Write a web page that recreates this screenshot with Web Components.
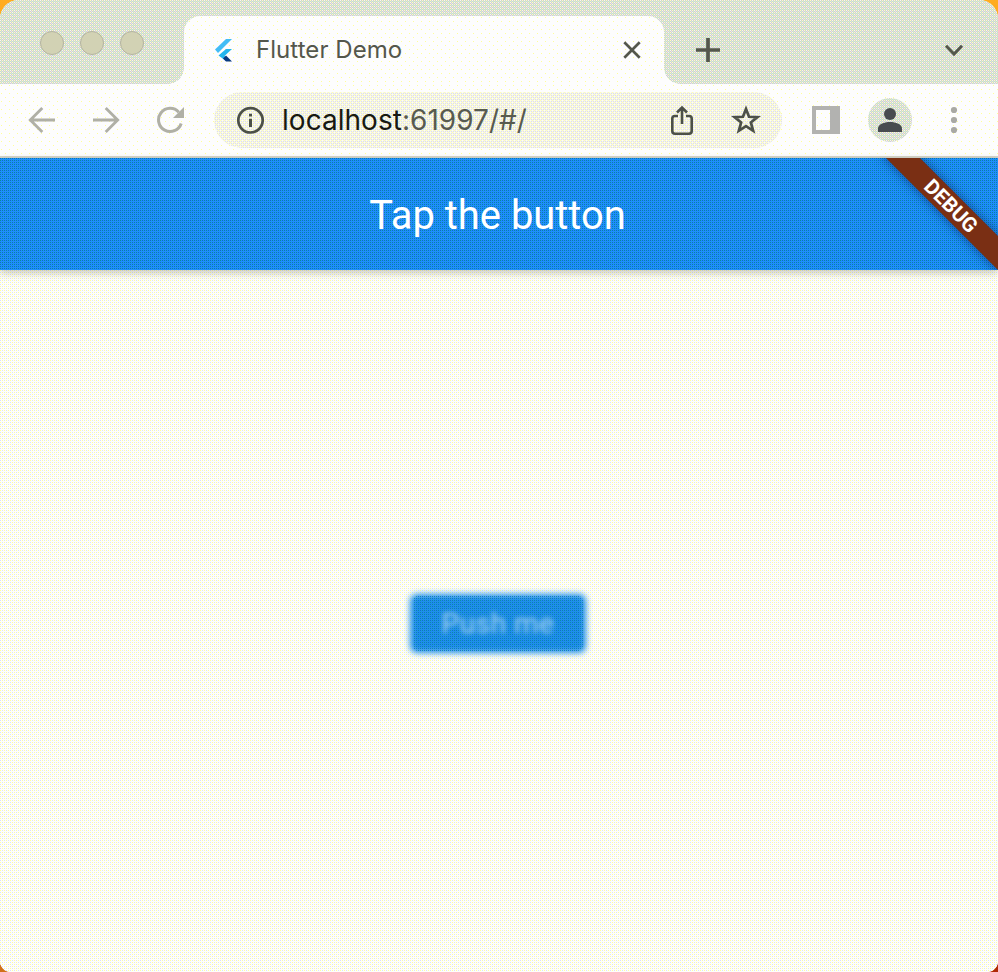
<!DOCTYPE html>
<html lang="en"><head><meta charset="utf-8"><title>Flutter Demo</title>
<style>
html,body{margin:0;width:998px;height:972px;overflow:hidden}
body{background:linear-gradient(100deg,transparent 50%,#b02a08 50%) bottom/100% 50% no-repeat,linear-gradient(#ffac20,#f58a00 50%,#d07018)}
</style></head><body>
<browser-window>
  <tab-strip slot="chrome">Flutter Demo</tab-strip>
  <tool-bar slot="chrome"><span slot="host">localhost</span><span slot="path">:61997/#/</span></tool-bar>
  <app-bar>Tap the button</app-bar>
  <app-body><push-button>Push me</push-button></app-body>
</browser-window>
<script>
// Builds a small repeating colour tile; each character is one pixel.
function tile(rows, palette){
  let s='';
  rows.forEach((r,y)=>[...r].forEach((c,x)=>{if(palette[c])s+=`<rect x="${x}" y="${y}" width="1" height="1" fill="${palette[c]}"/>`}));
  const w=rows[0].length,h=rows.length;
  return `url('data:image/svg+xml,${encodeURIComponent(`<svg xmlns="http://www.w3.org/2000/svg" width="${w}" height="${h}" shape-rendering="crispEdges">${s}</svg>`)}')`;
}
const root=document.documentElement.style;
root.setProperty('--strip',tile(['wgyg','gngn','ygwg','gngp'],{g:'#d0d0d2',w:'#f8faee',y:'#ffffba',n:'#ccf6cc',p:'#ecdcee'}));
root.setProperty('--page',tile(['y.l.','....','l.y.','....'],{y:'#ffff9e',l:'#dcdefc'}));
root.setProperty('--field',tile(['.l.l','y.w.','.l.l','w.y.'],{l:'#dedeec',y:'#ffffb4',w:'#fffff2'}));
root.setProperty('--bar',tile(['d.g.','....','g.d.','....'],{d:'#0c68cc',g:'#078a99'}));
root.setProperty('--white',tile(['........','.y......','........','........','........','.....y..','........','........'],{y:'#ffff99'}));
function define(name, html){
  customElements.define(name,class extends HTMLElement{
    constructor(){super();this.attachShadow({mode:'open'}).innerHTML=html}
  });
}
define('browser-window',`<style>
:host{display:flex;flex-direction:column;width:998px;height:972px;border-radius:19px 19px 11px 11px;overflow:hidden;background:#fff;font-family:Inter,"Liberation Sans",sans-serif}
</style><slot name="chrome"></slot><slot></slot>`);
define('tab-strip',`<style>
:host{display:flex;height:84px;flex:none;background:#dcdecf var(--strip);color:#54574c;box-sizing:border-box}
.lights{display:flex;gap:16px;padding:31px 0 0 40px;width:144px;box-sizing:border-box;flex:none}
.lights i{flex:none;width:24px;height:24px;border-radius:50%;box-sizing:border-box;background:#d2d2b4;border:1px solid #b4b4a0}
.tab{position:relative;margin:16px 0 0 40px;width:480px;height:68px;flex:none;display:flex;align-items:center;border-radius:16px 16px 0 0;background:#fdfdfd var(--white);box-sizing:border-box;padding:0 21px 0 28px}
.foot{position:absolute;bottom:0;width:16px;height:16px}
.l{left:-16px;background:radial-gradient(circle at 0 0,transparent 15.5px,#fdfdfd 16px)}
.r{right:-16px;background:radial-gradient(circle at 100% 0,transparent 15.5px,#fdfdfd 16px)}
.title{flex:1;margin-left:20px;font-size:24px;line-height:68px;letter-spacing:.06px}
svg{display:block;flex:none}
.plus{margin:38px 0 0 32px}.down{margin:44px 33px 0 auto}
</style>
<div class="lights"><i></i><i></i><i></i></div>
<div class="tab"><span class="foot l"></span>
<svg width="24" height="26" viewBox="0 0 24 26"><path d="M14 2H20L6 16 3 12.5Z" fill="#42bdf5"/><path d="M14 12H20L12.5 19 15.5 22 14 24 6.5 18.5Z" fill="#22b5ee"/><path d="M11 21.5 14 18.5 20 24.5H14Z" fill="#083a80"/></svg>
<span class="title"><slot></slot></span>
<svg width="22" height="22" viewBox="0 0 22 22" fill="none" stroke="currentColor" stroke-width="2.7"><path d="M3.3 3.3 18.7 18.7M18.7 3.3 3.3 18.7"/></svg>
<span class="foot r"></span></div>
<svg class="plus" width="24" height="24" viewBox="0 0 24 24" fill="none" stroke="currentColor" stroke-width="3.7"><path d="M12 0V24M0 12H24"/></svg>
<svg class="down" width="22" height="14" viewBox="0 0 22 14" fill="none" stroke="currentColor" stroke-width="3"><path d="M3 1.8 11 10 19 1.8"/></svg>`);
define('tool-bar',`<style>
:host{display:flex;align-items:center;height:74px;flex:none;background:#fdfdfd var(--white);border-bottom:2px solid #d4d4ca;box-sizing:border-box;padding-left:28px}
svg{display:block;flex:none}
.nav{color:#b0b0a6;display:flex;gap:36px;width:186px;flex:none}
.url{display:flex;align-items:center;width:568px;height:56px;border-radius:28px;background:#f6f6e6 var(--field) 0 1px;color:#4c5048;box-sizing:border-box;padding:0 21px 0 22px;flex:none}
.text{flex:1;margin-left:18px;font-size:28px;line-height:56px;height:56px;white-space:nowrap;color:#585b50;letter-spacing:.03px}
.text b{font-weight:400;color:#181a12}
.share{margin-right:37px}
.panel{margin-left:30px;color:#b2b2b0}
.avatar{width:44px;height:44px;flex:none;border-radius:50%;background:#dcdecf var(--strip) 0 0;margin-left:28px;display:grid;place-items:center}
.dots{margin-left:38px;color:#a9a9a4}
</style>
<div class="nav">
<svg width="28" height="28" viewBox="0 0 28 28" fill="none" stroke="currentColor" stroke-width="2.8"><path d="M27 14H3M14.3 2 2.3 14 14.3 26"/></svg>
<svg width="28" height="28" viewBox="0 0 28 28" fill="none" stroke="currentColor" stroke-width="2.8"><path d="M1 14H25M13.7 2 25.7 14 13.7 26"/></svg>
<svg width="28" height="28" viewBox="0 0 28 28" fill="none" stroke="currentColor" stroke-width="3"><path d="M25.2 17.5A11.6 11.6 0 1 1 22.8 6.2"/><path d="M28 1V12H17Z" fill="currentColor" stroke="none"/></svg>
</div>
<div class="url">
<svg width="28" height="28" viewBox="0 0 28 28" fill="none" stroke="currentColor" stroke-width="2.7"><circle cx="14.5" cy="14.3" r="12.2"/><path d="M14.5 12.8V21M14.5 7.8V10.6" stroke-width="3"/></svg>
<span class="text"><b><slot name="host"></slot></b><slot name="path"></slot></span>
<svg class="share" width="24" height="30" viewBox="0 0 24 30" fill="none" stroke="currentColor" stroke-width="2.6"><path d="M8 11H5Q2.3 11 2.3 13.5V26Q2.3 28.7 5 28.7H19Q21.7 28.7 21.7 26V13.5Q21.7 11 19 11H16M12 19V2.5M7 7.5 12 2.5 17 7.5"/></svg>
<svg width="30" height="30" viewBox="0 0 30 30" fill="none" stroke="currentColor" stroke-width="2.5"><path d="M15 4.5 17.8 11.7 25.6 12.1 19.5 17 21.6 24.7 15 20.4 8.4 24.7 10.5 17 4.4 12.1 12.2 11.7Z"  transform="translate(-1.2 -.9) scale(1.08)"/></svg>
</div>
<svg class="panel" width="28" height="28" viewBox="0 0 28 28"><path d="M0 0H28V28H0ZM4 4V24H18V4Z" fill="currentColor" fill-rule="evenodd"/></svg>
<div class="avatar"><svg width="24" height="24" viewBox="0 0 24 24" fill="#484c50"><circle cx="12" cy="6" r="6"/><path d="M0 24V20.5C0 11.8 24 11.8 24 20.5V24Z"/></svg></div>
<svg class="dots" width="8" height="28" viewBox="0 0 8 28" fill="currentColor"><circle cx="4" cy="4" r="3.1"/><circle cx="4" cy="14" r="3.1"/><circle cx="4" cy="24" r="3.1"/></svg>`);
define('app-bar',`<style>
:host{display:flex;position:relative;z-index:1;align-items:center;justify-content:center;height:112px;flex:none;background:#1e90fa var(--bar);color:#fff;font:39.9px/112px Roboto,sans-serif;box-shadow:0 3px 8px rgba(90,90,75,.32)}
.title{padding:3px 3px 0 0}
.clip{position:absolute;right:0;top:0;width:150px;height:112px;overflow:hidden}
.banner{position:absolute;width:170px;height:24px;left:17.5px;top:35.5px;transform:rotate(45deg);background:#7a2f14;box-shadow:0 0 12px rgba(0,0,50,.5);text-align:center;font:700 20.6px/24px Roboto,sans-serif}
</style><span class="title"><slot></slot></span><div class="clip"><div class="banner">DEBUG</div></div>`);
define('app-body',`<style>
:host{display:flex;flex:1;align-items:center;justify-content:center;background:#fefffb var(--page)}
</style><slot></slot>`);
define('push-button',`<style>
:host{display:grid;place-items:center;width:176px;height:59px;margin:4px 2px 0 0}
.face,.grain,.label{grid-area:1/1}
.face{width:176px;height:59px;border-radius:7px;background:#1e90ea;filter:blur(3px)}
.grain{width:170px;height:55px;border-radius:5px;background:var(--bar) 1px 0;opacity:.85}
.label{color:#acd6f4;filter:blur(2.4px);font:400 28px/60px Roboto,sans-serif;letter-spacing:.5px}
</style><div class="face"></div><div class="grain"></div><span class="label"><slot></slot></span>`);
</script></body></html>
